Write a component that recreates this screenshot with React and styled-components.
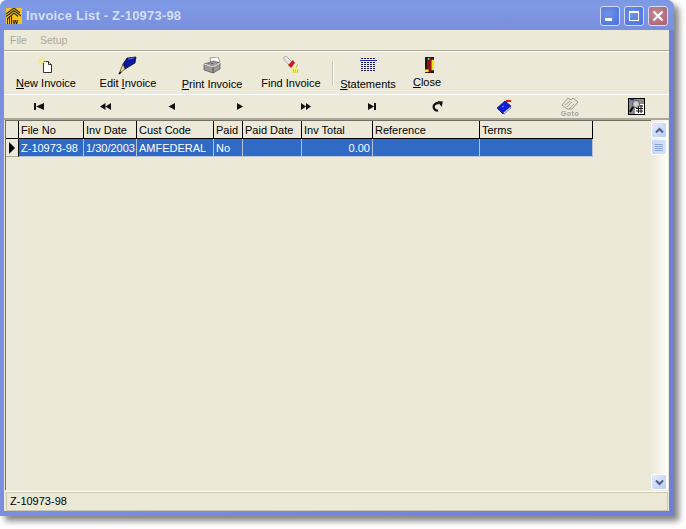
import React from "react";
import styled, { createGlobalStyle } from "styled-components";

const Global = createGlobalStyle`
  html, body { margin: 0; padding: 0; background: #fff; }
  body { font-family: "Liberation Sans", Arial, sans-serif; font-size: 11px; color: #000; }
`;

const Page = styled.div`
  width: 686px;
  height: 529px;
  overflow: hidden;
`;

const Win = styled.div`
  width: 674px;
  height: 516px;
  display: flex;
  flex-direction: column;
  background: linear-gradient(90deg, #7b8fde, #6f7fd8);
  border-radius: 7px 7px 0 0;
  box-shadow: 5px 5px 6px rgba(50, 50, 50, 0.6);
  padding: 0 5px 5px 4px;
  box-sizing: border-box;
`;

const TitleBar = styled.div`
  height: 30px;
  flex: none;
  margin: 0 -5px 0 -4px;
  padding: 0 6px 0 6px;
  display: flex;
  align-items: center;
  border-radius: 7px 7px 0 0;
  background: linear-gradient(180deg, #7d97e2 0%, #7f9ae4 20%, #7b93e0 60%, #7a90dd 100%);
`;

const LogoBox = styled.div`
  width: 16px;
  height: 16px;
  margin-top: 2px;
  flex: none;
  line-height: 0;
`;

const TitleText = styled.div`
  margin-left: 4px;
  font-weight: bold;
  font-size: 13px;
  letter-spacing: 0.2px;
  color: #d3dff6;
`;

const WinButtons = styled.div`
  margin-left: auto;
  display: flex;
  gap: 4px;
  margin-top: 2px;
`;

const WinBtn = styled.div`
  width: 20px;
  height: 20px;
  box-sizing: border-box;
  border: 1px solid #d4dcf6;
  border-radius: 3px;
  background: ${p => (p.$close
    ? "radial-gradient(circle at 40% 40%, #c48a94, #ab5d70)"
    : "radial-gradient(circle at 40% 40%, #6d93ea, #4a6fdc)")};
  display: flex;
  align-items: center;
  justify-content: center;
`;

const Body = styled.div`
  flex: 1;
  min-height: 0;
  display: flex;
  flex-direction: column;
  background: #ece9d8;
`;

const MenuBar = styled.div`
  height: 21px;
  flex: none;
  display: flex;
  align-items: center;
  gap: 13px;
  padding-left: 6px;
  font-size: 10.5px;
  color: #aca899;
  border-bottom: 1px solid #aca899;
  box-shadow: 0 1px 0 #fff;
  box-sizing: border-box;
`;

const ToolBar = styled.div`
  height: 43px;
  margin-top: 1px;
  flex: none;
  display: flex;
  border-bottom: 1px solid #fff;
  box-sizing: border-box;
`;

const ToolItem = styled.div`
  width: ${p => p.$w}px;
  flex: none;
  display: flex;
  flex-direction: column;
  align-items: center;
  padding-top: 2px;
  box-sizing: border-box;
`;

const ToolIcon = styled.div`
  height: 22px;
  display: flex;
  align-items: center;
  justify-content: center;
  padding-left: ${p => p.$nudge || 0}px;
`;

const ToolLabel = styled.div`
  margin-top: ${p => p.$top}px;
  line-height: 13px;
  white-space: nowrap;
  u { text-underline-offset: 1px; }
`;

const ToolSep = styled.div`
  width: 2px;
  height: 25px;
  margin: 9px 5px 0 6px;
  flex: none;
  background: #c9c6b6;
  border-right: 1px solid #fff;
  box-sizing: border-box;
`;

const NavBar = styled.div`
  height: 25px;
  flex: none;
  display: grid;
  grid-template-columns: repeat(10, 66.4px);
  padding-left: 2px;
  align-items: center;
  border-bottom: 2px solid #aca899;
  box-sizing: border-box;
`;

const NavBtn = styled.div`
  display: flex;
  justify-content: center;
  align-items: center;
`;

const GridArea = styled.div`
  flex: 1;
  min-height: 0;
  display: flex;
  justify-content: space-between;
  padding: 0 2px 2px 0;
`;

const GridFrame = styled.div`
  flex: 1;
  min-height: 0;
  margin-left: 1px;
  border-left: 1px solid #716f64;
  border-top: 1px solid #716f64;
`;

const Row = styled.div`
  display: flex;
  height: 18px;
  width: 586px;
  box-sizing: border-box;
`;

const Indicator = styled.div`
  width: 13px;
  flex: none;
  box-sizing: border-box;
  background: #ece9d8;
  border-right: 1px solid #000;
  border-bottom: ${p => (p.$head ? "1px solid #000" : "1px solid #aca899")};
  display: flex;
  align-items: center;
  justify-content: center;
`;

const HeadCell = styled.div`
  width: ${p => p.$w}px;
  flex: none;
  box-sizing: border-box;
  padding: 0 0 0 2px;
  line-height: 18px;
  border-right: 1px solid #000;
  border-bottom: 1px solid #000;
  background: #ece9d8;
  white-space: nowrap;
  overflow: hidden;
`;

const Cell = styled.div`
  width: ${p => p.$w}px;
  flex: none;
  box-sizing: border-box;
  padding: 0 2px;
  line-height: 18px;
  color: #fff;
  background: #316ac5;
  border-right: 1px solid #b8c4d6;
  border-bottom: 1px solid #b8c4d6;
  text-align: ${p => (p.$right ? "right" : "left")};
  white-space: nowrap;
  overflow: hidden;
`;

const Scroll = styled.div`
  width: 17px;
  flex: none;
  display: flex;
  flex-direction: column;
  padding: 2px 0 0;
  background: linear-gradient(90deg, #ece9d8, #f6f5ee 60%, #fdfdfb);
  margin-right: -1px;
`;

const ScrollBtn = styled.div`
  height: 16px;
  width: 16px;
  flex: none;
  box-sizing: border-box;
  border: 1px solid #fff;
  border-radius: 2px;
  background: linear-gradient(135deg, #e3ebfd, #b9cdf8);
  display: flex;
  align-items: center;
  justify-content: center;
`;

const Thumb = styled(ScrollBtn)`
  margin-top: 1px;
  flex-direction: column;
  gap: 1px;
  background: linear-gradient(90deg, #c5d6fa, #d6e2fc);
`;

const ThumbLine = styled.div`
  width: 8px;
  height: 1px;
  background: #8ea6dc;
`;

const ScrollGap = styled.div`
  flex: 1;
`;

const StatusBar = styled.div`
  height: 19px;
  flex: none;
  margin: 0 1px 0 2px;
  padding-left: 3px;
  line-height: 17px;
  box-sizing: border-box;
  border: 1px solid #cbc8b4;
  background: #ebe8d6;
  box-shadow: 0 -1px 0 #fff;
`;

const columns = [
  { name: "File No", w: 65, value: "Z-10973-98" },
  { name: "Inv Date", w: 53, value: "1/30/2003" },
  { name: "Cust Code", w: 77, value: "AMFEDERAL" },
  { name: "Paid", w: 29, value: "No" },
  { name: "Paid Date", w: 59, value: "" },
  { name: "Inv Total", w: 71, value: "0.00", right: true },
  { name: "Reference", w: 107, value: "" },
  { name: "Terms", w: 113, value: "" },
];

const Logo = () => (
  <svg width="16" height="16" viewBox="0 0 16 16">
    <rect width="16" height="16" fill="#f6c21e" />
    <path d="M0 6 L8 0 L14 5 M0 8.5 L8 2.5 L15 8 M1 11 L8 5 L12 8.5" fill="none" stroke="#3a3010" strokeWidth="1.1" />
    <path d="M1.5 16V10M3.5 16V9M5.5 16V8" stroke="#3a3010" strokeWidth="1" />
    <text x="6.5" y="15.5" fontSize="7" fontWeight="bold" fontFamily="Liberation Sans" fill="#111">w</text>
  </svg>
);

const NewIcon = () => (
  <svg width="16" height="18" viewBox="0 0 16 18">
    <path d="M5.5 5.5h5l3 3v8h-8z" fill="#fff" stroke="#333" />
    <path d="M10.5 5.5v3h3" fill="#ddd" stroke="#333" />
    <path d="M4 1v8M0 5h8M1.5 2.5l5 5M6.5 2.5l-5 5" stroke="#f6e24a" strokeWidth="1" />
    <rect x="3" y="4" width="2" height="2" fill="#fff" />
  </svg>
);

const EditIcon = () => (
  <svg width="20" height="19" viewBox="0 0 20 19">
    <path d="M9 2 L18 1 L17 7 L7 13 L5 8z" fill="#0a1aa0" stroke="#000" strokeWidth="0.7" />
    <path d="M5 8 L7 13 L2 17 L1 18z" fill="#f4e77e" stroke="#222" strokeWidth="0.7" />
    <path d="M10 3l6-1" stroke="#5a78e8" />
    <path d="M1 18l2-2" stroke="#000" strokeWidth="1.4" />
  </svg>
);

const PrintIcon = () => (
  <svg width="18" height="17" viewBox="0 0 18 17">
    <path d="M7 1l8-1 2 5-9 3z" fill="#fff" stroke="#777" strokeWidth="0.7" />
    <path d="M1 7l10-3 6 2v6l-7 4-9-3z" fill="#9a9a98" stroke="#555" strokeWidth="0.7" />
    <path d="M1 7l9 3 7-4" fill="none" stroke="#dcdcdc" />
    <path d="M10 10v6" stroke="#555" />
    <rect x="5" y="6" width="2" height="1" fill="#30b040" />
    <rect x="8" y="6" width="2" height="1" fill="#e03030" />
  </svg>
);

const FindIcon = () => (
  <svg width="18" height="18" viewBox="0 0 18 18">
    <path d="M1 2 L4 0 L10 6 L7 9z" fill="#e8e8e8" stroke="#999" strokeWidth="0.7" />
    <path d="M6 9 L11 4 L13 7 L9 12z" fill="#d81818" />
    <path d="M10 13l6-6v10h-6z" fill="#f8f070" />
    <path d="M11 14h1M13 14h1M15 14h1M11 16h1M13 16h1M15 16h1M14 11h1M15 9h1" stroke="#999" />
  </svg>
);

const StatementsIcon = () => (
  <svg width="17" height="14" viewBox="0 0 17 14">
    <path d="M1 0.5h15" stroke="#14143c" strokeDasharray="2 1" />
    <path d="M0 2.5h17" stroke="#1e2ca8" />
    {[4, 6, 8, 10, 12].map(y => (
      <path key={y} d={`M1 ${y + 0.5}h15`} stroke="#1a1a5a" strokeDasharray="2 1" />
    ))}
  </svg>
);

const CloseIcon = () => (
  <svg width="9" height="16" viewBox="0 0 10 18">
    <rect x="0" y="0" width="10" height="18" fill="#111" />
    <rect x="7" y="3" width="3" height="12" fill="#f4e818" />
    <path d="M2 2 L7 0 V18 L2 16z" fill="#8c1010" />
    <rect x="3" y="1" width="2" height="2" fill="#40e0e0" />
    <rect x="0" y="14" width="4" height="3" fill="#f4e818" />
  </svg>
);

const Nav = ({ kind }) => {
  const shapes = {
    first: "M1 1h2v7H1zM11 1v7L3 4.5z",
    prev2: "M6.5 1v7L1 4.5zM12 1v7L6.5 4.5z",
    prev: "M10 1v7L3.5 4.5z",
    next: "M5 1v7l6-3.5z",
    next2: "M3 1v7l5-3.5zM8 1v7l5-3.5z",
    last: "M3 1v7l6-3.5zM9 1h2v7H9z",
  };
  return (
    <svg width="13" height="9" viewBox="0 0 13 9">
      <path d={shapes[kind]} fill="#111" />
    </svg>
  );
};

const RefreshIcon = () => (
  <svg width="11" height="11" viewBox="0 0 11 11">
    <path d="M6 9.5 A3.6 3.6 0 0 1 3 3.2 A3.6 3.6 0 0 1 7 2.4" fill="none" stroke="#111" strokeWidth="2.2" />
    <path d="M5.5 0 L10.8 0.6 L9.6 6 z" fill="#111" />
  </svg>
);

const BookIcon = () => (
  <svg width="16" height="16" viewBox="0 0 16 16">
    <path d="M1 9 L9 2 L15 7 L7 15z" fill="#1020d8" stroke="#00086a" strokeWidth="0.7" />
    <path d="M7 14 L14.5 7.5 L15 9 L8 15z" fill="#fff" stroke="#00086a" strokeWidth="0.5" />
    <path d="M10 2h5" stroke="#e01818" strokeWidth="2" />
    <path d="M6 8l2-1" stroke="#8090f0" />
  </svg>
);

const GotoIcon = () => (
  <svg width="20" height="20" viewBox="0 0 20 20">
    <path d="M2 8 L8 1 L11 3 L13 1 L18 5 L12 12 L7 12z" fill="#e8e5d6" stroke="#9a9a92" />
    <path d="M5 8l5-4M7 10l5-5M9 12l5-5" stroke="#aaa9a0" />
    <text x="10" y="19" textAnchor="middle" fontSize="7" fontWeight="bold" letterSpacing="0.6" fontFamily="Liberation Sans" fill="#a0a098">Goto</text>
  </svg>
);

const ReportIcon = () => (
  <svg width="17" height="17" viewBox="0 0 17 17">
    <rect x="0.5" y="0.5" width="16" height="16" fill="#8a8a8a" stroke="#000" />
    <rect x="7" y="6" width="9" height="10" fill="#fff" />
    <path d="M8 8h7M8 10.5h7M8 13h7M10.5 7v8M13 7v8" stroke="#111" />
    <circle cx="8" cy="6" r="3.5" fill="#cfcfcf" stroke="#555" />
    <path d="M5 9l-3 5" stroke="#000" strokeWidth="2" />
    <path d="M2 1.5h4" stroke="#1020d8" strokeWidth="1.5" />
  </svg>
);

const Chevron = ({ down }) => (
  <svg width="9" height="7" viewBox="0 0 9 7">
    <path d={down ? "M1 1.5l3.5 3.5 3.5-3.5" : "M1 5.5l3.5-3.5 3.5 3.5"} fill="none" stroke="#4d6185" strokeWidth="2" />
  </svg>
);

const tools = [
  { w: 84, icon: <NewIcon />, top: 1, label: <><u>N</u>ew Invoice</> },
  { w: 80, icon: <EditIcon />, top: 1, label: <>Edit <u>I</u>nvoice</> },
  { w: 88, icon: <PrintIcon />, top: 2, label: <><u>P</u>rint Invoice</> },
  { w: 70, icon: <FindIcon />, top: 1, label: <>Find Invoice</> },
];

export default function App() {
  return (
    <Page>
      <Global />
      <Win>
        <TitleBar>
          <LogoBox><Logo /></LogoBox>
          <TitleText>Invoice List - Z-10973-98</TitleText>
          <WinButtons>
            <WinBtn>
              <svg width="14" height="14" viewBox="0 0 14 14"><rect x="2" y="9" width="7" height="3" fill="#fff" /></svg>
            </WinBtn>
            <WinBtn>
              <svg width="14" height="14" viewBox="0 0 14 14"><rect x="2.5" y="3.5" width="9" height="8" fill="none" stroke="#fff" /><rect x="2" y="2" width="10" height="2" fill="#fff" /></svg>
            </WinBtn>
            <WinBtn $close>
              <svg width="14" height="14" viewBox="0 0 14 14"><path d="M2.5 2.5l9 9M11.5 2.5l-9 9" stroke="#fff" strokeWidth="2" /></svg>
            </WinBtn>
          </WinButtons>
        </TitleBar>
        <Body>
          <MenuBar>
            <span>File</span>
            <span>Setup</span>
          </MenuBar>
          <ToolBar>
            {tools.map((t, i) => (
              <ToolItem key={i} $w={t.w}>
                <ToolIcon>{t.icon}</ToolIcon>
                <ToolLabel $top={t.top}>{t.label}</ToolLabel>
              </ToolItem>
            ))}
            <ToolSep />
            <ToolItem $w={58}>
              <ToolIcon><StatementsIcon /></ToolIcon>
              <ToolLabel $top={2}><u>S</u>tatements</ToolLabel>
            </ToolItem>
            <ToolItem $w={60}>
              <ToolIcon $nudge={4}><CloseIcon /></ToolIcon>
              <ToolLabel $top={0}><u>C</u>lose</ToolLabel>
            </ToolItem>
          </ToolBar>
          <NavBar>
            <NavBtn><Nav kind="first" /></NavBtn>
            <NavBtn><Nav kind="prev2" /></NavBtn>
            <NavBtn><Nav kind="prev" /></NavBtn>
            <NavBtn><Nav kind="next" /></NavBtn>
            <NavBtn><Nav kind="next2" /></NavBtn>
            <NavBtn><Nav kind="last" /></NavBtn>
            <NavBtn><RefreshIcon /></NavBtn>
            <NavBtn><BookIcon /></NavBtn>
            <NavBtn><GotoIcon /></NavBtn>
            <NavBtn><ReportIcon /></NavBtn>
          </NavBar>
          <GridArea>
            <GridFrame>
              <Row $head>
                <Indicator $head />
                {columns.map(c => (
                  <HeadCell key={c.name} $w={c.w}>{c.name}</HeadCell>
                ))}
              </Row>
              <Row>
                <Indicator>
                  <svg width="8" height="12" viewBox="0 0 8 12"><path d="M1 0v12l6-6z" fill="#000" /></svg>
                </Indicator>
                {columns.map(c => (
                  <Cell key={c.name} $w={c.w} $right={c.right}>{c.value}</Cell>
                ))}
              </Row>
            </GridFrame>
            <Scroll>
              <ScrollBtn><Chevron /></ScrollBtn>
              <Thumb>
                <ThumbLine /><ThumbLine /><ThumbLine /><ThumbLine />
              </Thumb>
              <ScrollGap />
              <ScrollBtn><Chevron down /></ScrollBtn>
            </Scroll>
          </GridArea>
          <StatusBar>Z-10973-98</StatusBar>
        </Body>
      </Win>
    </Page>
  );
}
